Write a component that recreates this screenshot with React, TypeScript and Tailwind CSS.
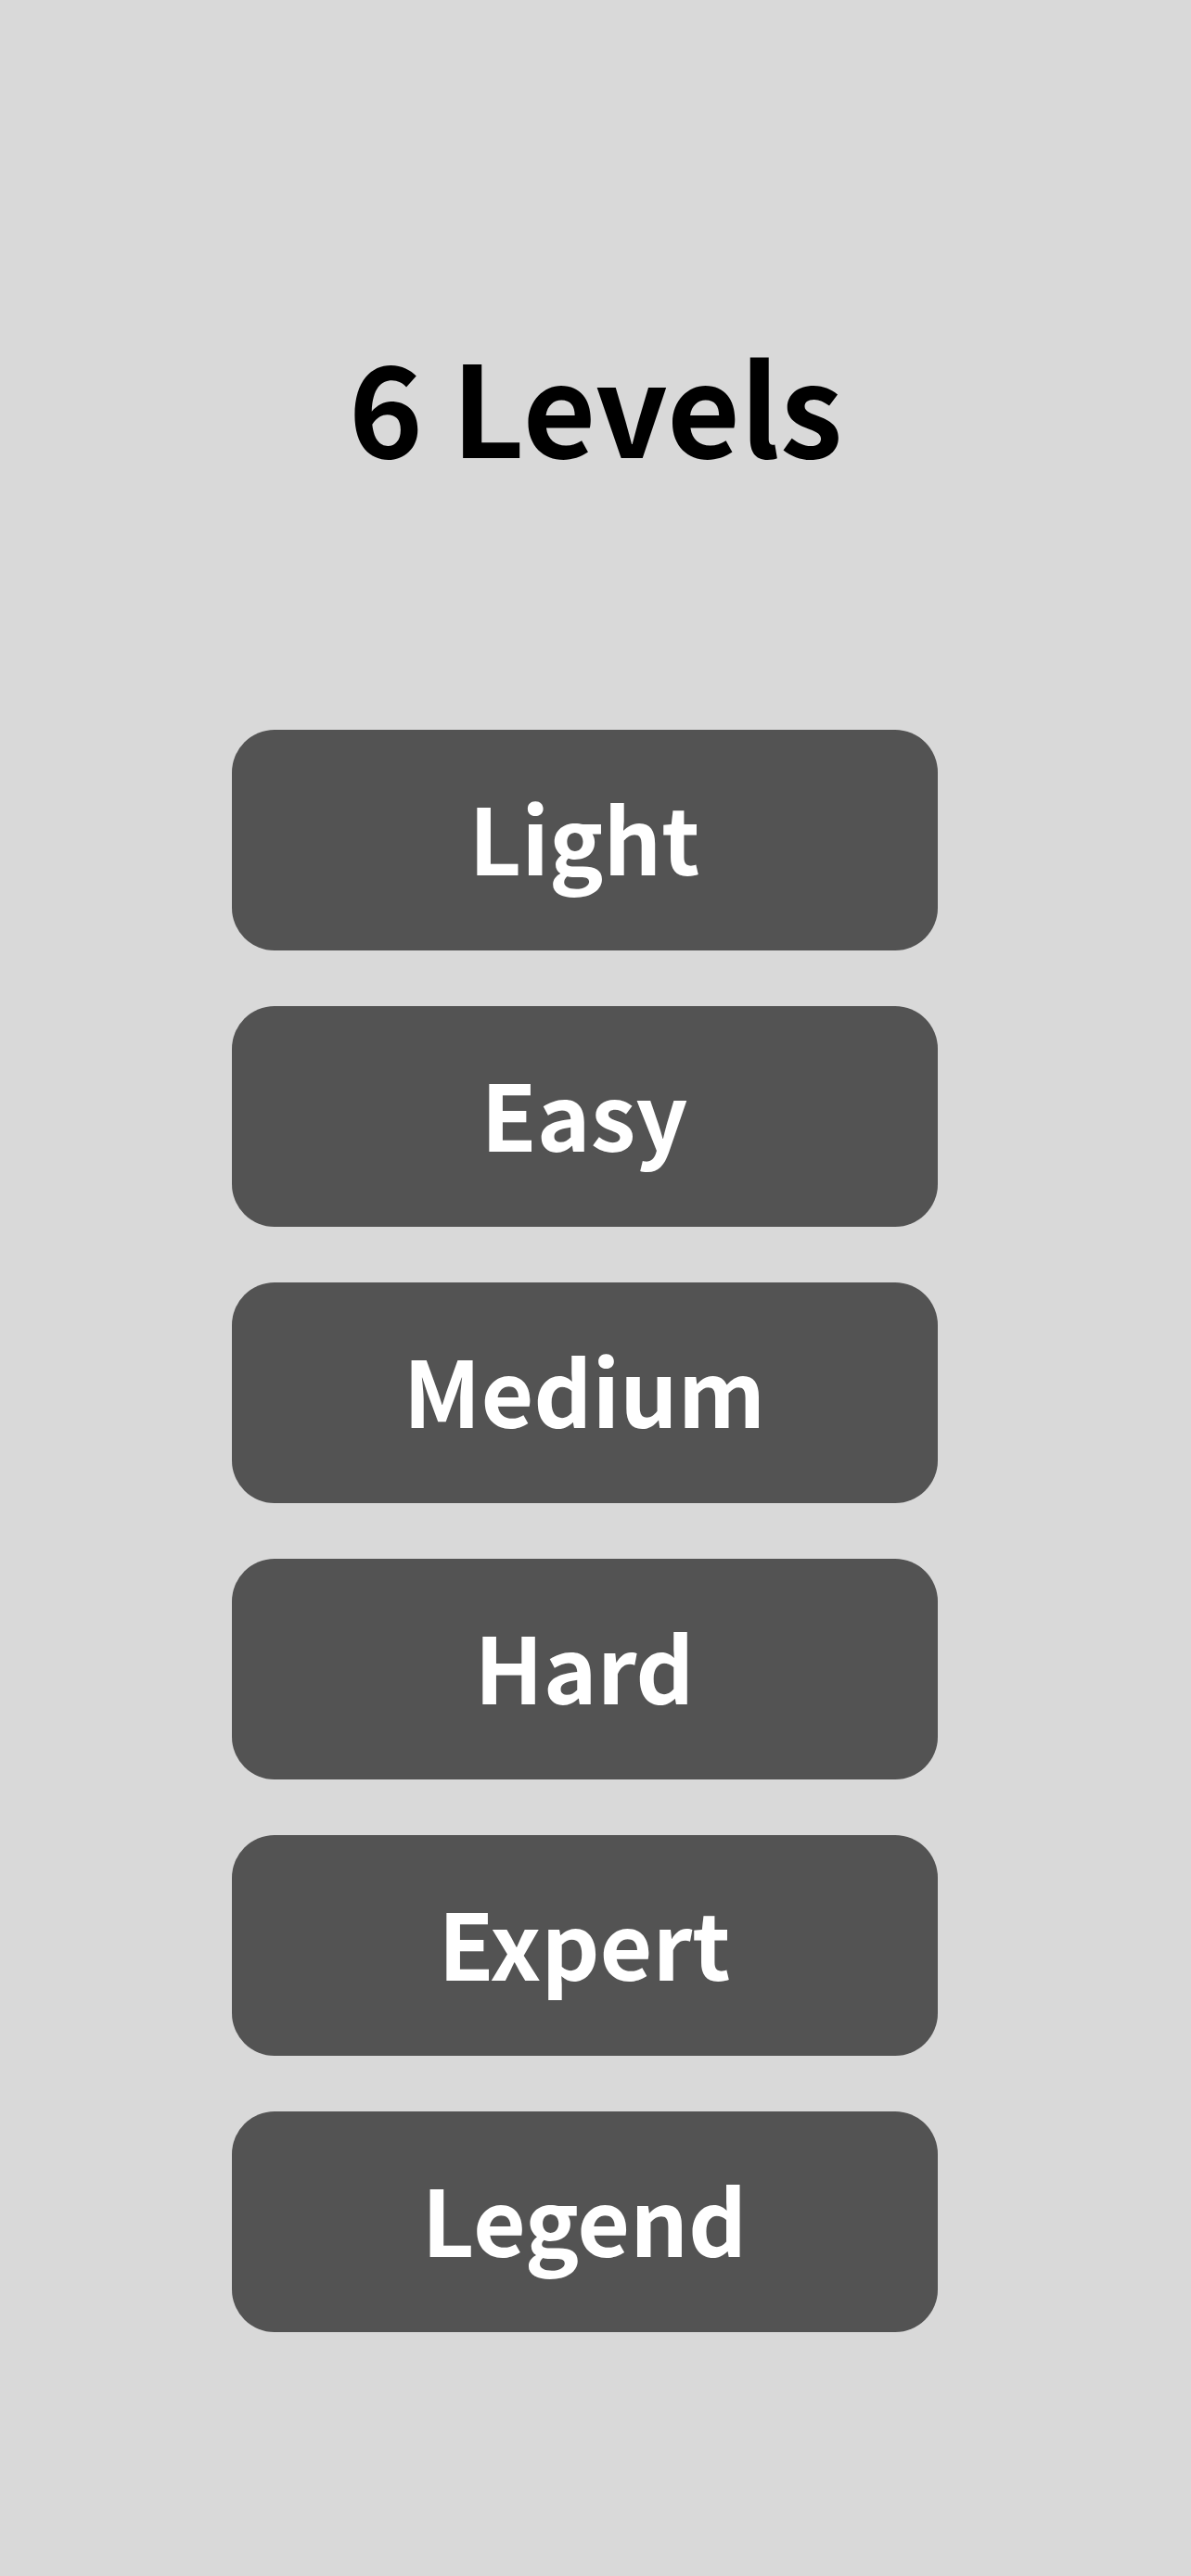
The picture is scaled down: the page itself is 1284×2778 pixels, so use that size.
const levels = ["Light", "Easy", "Medium", "Hard", "Expert", "Legend"];

export default function App() {
  return (
    <main className="flex min-h-screen flex-col items-center bg-[#d9d9d9] px-6 pt-[339px] pb-[262px] font-['Noto_Sans_CJK_SC',sans-serif] font-bold">
      <h1 className="text-center text-[136px] leading-[192px] text-black">6 Levels</h1>
      <nav aria-label="Levels" className="mt-[256px] flex w-full flex-col items-center gap-[60px] pr-6">
        {levels.map((level) => (
          <button
            key={level}
            type="button"
            className="flex h-[238px] w-full max-w-[761px] items-center justify-center rounded-[46px] bg-[#535353] pb-2.5 text-[98px] leading-[136px] text-white"
          >
            {level}
          </button>
        ))}
      </nav>
    </main>
  );
}
